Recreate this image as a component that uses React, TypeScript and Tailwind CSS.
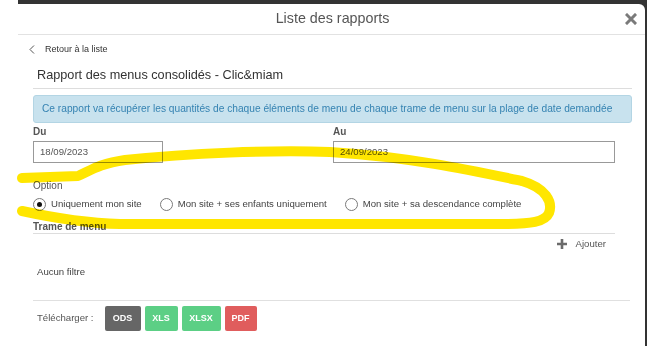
import React from 'react';

const font = { fontFamily: '"Liberation Sans", Arial, sans-serif' };

function Radio({ checked, label }: { checked?: boolean; label: string }) {
  return (
    <label className="flex items-center gap-[5px]">
      <span className="w-[13px] h-[13px] rounded-full border border-[#7a7a7a] bg-white flex items-center justify-center">
        {checked && <span className="w-[5px] h-[5px] rounded-full bg-[#111]" />}
      </span>
      <span className="text-[9.6px] text-[#444]">{label}</span>
    </label>
  );
}

function DlButton({ label, color, width }: { label: string; color: string; width: string }) {
  return (
    <button className={`${color} ${width} h-[25px] rounded-[2px] text-white text-[9px] font-bold`}>{label}</button>
  );
}

export default function App() {
  return (
    <div className="relative w-[649px] h-[346px] bg-white overflow-hidden" style={font}>
      <div className="ml-[18px] w-[629px] h-full bg-[#333] pt-[4px] pr-[2px]">
        <div className="h-full bg-white rounded-tr-[6px]">
          {/* header */}
          <div className="h-[31px] border-b border-[#e2e2e2] grid grid-cols-[1fr_auto_1fr] items-center">
            <div />
            <div className="text-[14.3px] text-[#555] pl-[2px]">Liste des rapports</div>
            <div className="flex justify-end pr-[8px]">
              <svg width="12" height="12" viewBox="0 0 12 12">
                <path d="M2 2 L10 10 M10 2 L2 10" stroke="#7a7a7a" strokeWidth="3" strokeLinecap="square" />
              </svg>
            </div>
          </div>

          <div className="pl-[15px] pr-[13px]">
            <div className="h-[29px] flex items-center gap-[10px] text-[9px] text-[#333]">
              <svg width="6" height="9" viewBox="0 0 6 9" className="ml-[-4px]">
                <path d="M5 0.5 L1 4.5 L5 8.5" stroke="#555" strokeWidth="1" fill="none" />
              </svg>
              <span>Retour à la liste</span>
            </div>

            <div className="h-[25px] border-b border-[#ddd] flex items-center pl-[4px] text-[12.7px] text-[#333]">
              Rapport des menus consolidés - Clic&amp;miam
            </div>

            <div className="mt-[6px] h-[28px] bg-[#c8e2ee] border border-[#b3d5e4] rounded-[3px] flex items-center pl-[8px] text-[10.2px] text-[#3583b2] whitespace-nowrap">
              Ce rapport va récupérer les quantités de chaque éléments de menu de chaque trame de menu sur la plage de date demandée
            </div>

            <div className="pr-[17px] grid grid-cols-[300px_1fr]">
              <div>
                <div className="mt-[2px] h-[12px] flex items-center text-[10px] font-bold text-[#555]">Du</div>
                <div className="mt-[4px] w-[130px] h-[22px] border border-[#999] flex items-center pl-[6px] text-[9.6px] text-[#555]">
                  18/09/2023
                </div>
              </div>
              <div>
                <div className="mt-[2px] h-[12px] flex items-center text-[10px] font-bold text-[#555]">Au</div>
                <div className="mt-[4px] h-[22px] border border-[#999] flex items-center pl-[6px] text-[9.6px] text-[#555]">
                  24/09/2023
                </div>
              </div>
            </div>

            <div className="mt-[16px] h-[12px] flex items-center text-[10px] text-[#555]">Option</div>
            <div className="mt-[6px] h-[14px] flex items-center">
              <Radio checked label="Uniquement mon site" />
              <div className="w-[18px]" />
              <Radio label="Mon site + ses enfants uniquement" />
              <div className="w-[18px]" />
              <Radio label="Mon site + sa descendance complète" />
            </div>

            <div className="mr-[17px] mt-[9px] h-[14px] border-b border-[#ddd] flex items-center text-[10px] font-bold text-[#555]">
              Trame de menu
            </div>
            <div className="mr-[26px] h-[20px] flex items-center justify-end gap-[9px] text-[9.6px] text-[#555]">
              <svg width="10" height="10" viewBox="0 0 10 10">
                <path d="M5 0 V10 M0 5 H10" stroke="#6b6b6b" strokeWidth="2.6" />
              </svg>
              <span>Ajouter</span>
            </div>

            <div className="mt-[11px] h-[14px] flex items-center pl-[4px] text-[9.6px] text-[#444]">Aucun filtre</div>

            <div className="mt-[21px] mr-[2px] border-t border-[#e0e0e0]">
              <div className="mt-[5px] flex items-center pl-[4px]">
                <span className="text-[9.6px] text-[#555] mr-[11px]">Télécharger :</span>
                <div className="flex gap-[4px]">
                  <DlButton label="ODS" color="bg-[#666]" width="w-[36px]" />
                  <DlButton label="XLS" color="bg-[#5ccf85]" width="w-[33px]" />
                  <DlButton label="XLSX" color="bg-[#5ccf85]" width="w-[39px]" />
                  <DlButton label="PDF" color="bg-[#e05d5d]" width="w-[32px]" />
                </div>
              </div>
            </div>
          </div>
        </div>
      </div>

      {/* hand-drawn highlight */}
      <svg className="absolute inset-0 pointer-events-none mix-blend-multiply" width="649" height="346">
        <path
          d="M22 178 L78 176 C90 171 98 164 125 160 C190 153 270 150 330 152 C410 157 470 170 522 181 C546 188 553 202 549 213 C545 222 532 224 500 224 L120 224 C80 223 45 216 22 211"
          stroke="#ffe600"
          strokeWidth="10"
          strokeLinecap="round"
          strokeLinejoin="round"
          fill="none"
        />
      </svg>
    </div>
  );
}
